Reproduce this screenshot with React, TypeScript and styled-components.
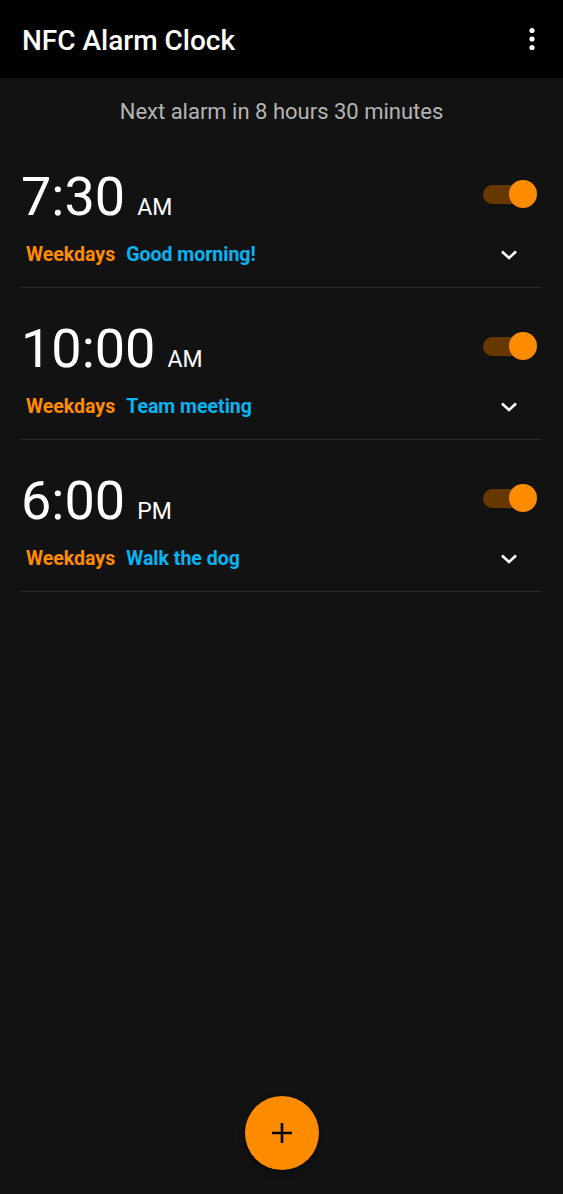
import React from "react";
import styled, { createGlobalStyle } from "styled-components";

const GlobalStyle = createGlobalStyle`
  html, body {
    margin: 0;
    padding: 0;
    background: #121212;
  }
  body {
    font-family: Roboto, "Noto Sans", sans-serif;
    color: #fff;
  }
  #root {
    min-height: 100vh;
  }
`;

const Page = styled.div`
  min-height: 1194px;
  background: #121212;
  display: flex;
  flex-direction: column;
`;

const AppBar = styled.header`
  height: 78px;
  background: #000;
  display: flex;
  align-items: center;
  justify-content: space-between;
  padding: 0 20px 0 22px;
  box-sizing: border-box;
`;

const Title = styled.h1`
  margin: 4px 0 0;
  font-size: 28px;
  font-weight: 500;
  color: #fff;
  line-height: 1;
`;

const MenuButton = styled.button`
  width: 24px;
  height: 30px;
  padding: 0;
  border: 0;
  background: transparent;
  display: flex;
  align-items: center;
  justify-content: center;
  margin-right: -1px;
`;

const NextAlarm = styled.div`
  padding-top: 20px;
  font-size: 22px;
  line-height: 28px;
  color: #b4b4b4;
  text-align: center;
`;

const List = styled.div`
  margin-top: 10px;
  display: flex;
  flex-direction: column;
`;

const Row = styled.div`
  margin: 0 21px;
  padding: 39px 0 20px;
  border-bottom: 1px solid #2b2b2b;
  display: flex;
  flex-direction: column;
  gap: 14px;
`;

const TopLine = styled.div`
  display: flex;
  align-items: center;
  justify-content: space-between;
  height: 54px;
`;

const Time = styled.div`
  display: flex;
  align-items: baseline;
  line-height: 54px;
`;

const Clock = styled.span`
  font-size: 54px;
  font-weight: 400;
  color: #fff;
`;

const Meridiem = styled.span`
  font-size: 23px;
  margin-left: 12px;
  color: #fff;
`;

const Toggle = styled.div`
  position: relative;
  width: 54px;
  height: 28px;
  margin-right: 5px;
  margin-top: -16px;
  display: flex;
  align-items: center;
`;

const Track = styled.div`
  width: 46px;
  height: 19px;
  border-radius: 10px;
  background: #663900;
`;

const Thumb = styled.div`
  position: absolute;
  right: 0;
  top: 0;
  width: 28px;
  height: 28px;
  border-radius: 50%;
  background: #ff8c00;
`;

const BottomLine = styled.div`
  display: flex;
  align-items: center;
  justify-content: space-between;
  height: 24px;
  padding-left: 5px;
`;

const Labels = styled.div`
  display: flex;
  gap: 11px;
  font-size: 19.5px;
  font-weight: 700;
  line-height: 24px;
`;

const Label = styled.span<{ $tone: "orange" | "blue" }>`
  color: ${(p) => (p.$tone === "orange" ? "#ff8c00" : "#06b4f2")};
`;

const Expand = styled.div`
  width: 24px;
  height: 24px;
  margin-right: 21px;
  display: flex;
  align-items: center;
  justify-content: center;
`;

const Fab = styled.button`
  position: fixed;
  left: 50%;
  bottom: 24px;
  transform: translateX(-50%);
  width: 74px;
  height: 74px;
  border-radius: 50%;
  border: 0;
  background: #ff8c00;
  display: flex;
  align-items: center;
  justify-content: center;
  box-shadow: 0 3px 6px rgba(0, 0, 0, 0.45);
  padding: 0;
`;

const alarms = [
  { time: "7:30", mer: "AM", label: "Good morning!" },
  { time: "10:00", mer: "AM", label: "Team meeting" },
  { time: "6:00", mer: "PM", label: "Walk the dog" },
];

export default function App() {
  return (
    <Page>
      <GlobalStyle />
      <AppBar>
        <Title>NFC Alarm Clock</Title>
        <MenuButton aria-label="More options">
          <svg width="6" height="24" viewBox="0 0 6 24">
            <circle cx="3" cy="3.5" r="2.6" fill="#fff" />
            <circle cx="3" cy="12" r="2.6" fill="#fff" />
            <circle cx="3" cy="20.5" r="2.6" fill="#fff" />
          </svg>
        </MenuButton>
      </AppBar>
      <NextAlarm>Next alarm in 8 hours 30 minutes</NextAlarm>
      <List>
        {alarms.map((a) => (
          <Row key={a.time}>
            <TopLine>
              <Time>
                <Clock>{a.time}</Clock>
                <Meridiem>{a.mer}</Meridiem>
              </Time>
              <Toggle>
                <Track />
                <Thumb />
              </Toggle>
            </TopLine>
            <BottomLine>
              <Labels>
                <Label $tone="orange">Weekdays</Label>
                <Label $tone="blue">{a.label}</Label>
              </Labels>
              <Expand>
                <svg width="18" height="12" viewBox="0 0 18 12">
                  <path
                    d="M2 2.5 L9 9 L16 2.5"
                    fill="none"
                    stroke="#fff"
                    strokeWidth="2.6"
                  />
                </svg>
              </Expand>
            </BottomLine>
          </Row>
        ))}
      </List>
      <Fab aria-label="Add alarm">
        <svg width="22" height="22" viewBox="0 0 22 22">
          <path d="M11 1 V21 M1 11 H21" stroke="#000" strokeWidth="2.6" />
        </svg>
      </Fab>
    </Page>
  );
}
